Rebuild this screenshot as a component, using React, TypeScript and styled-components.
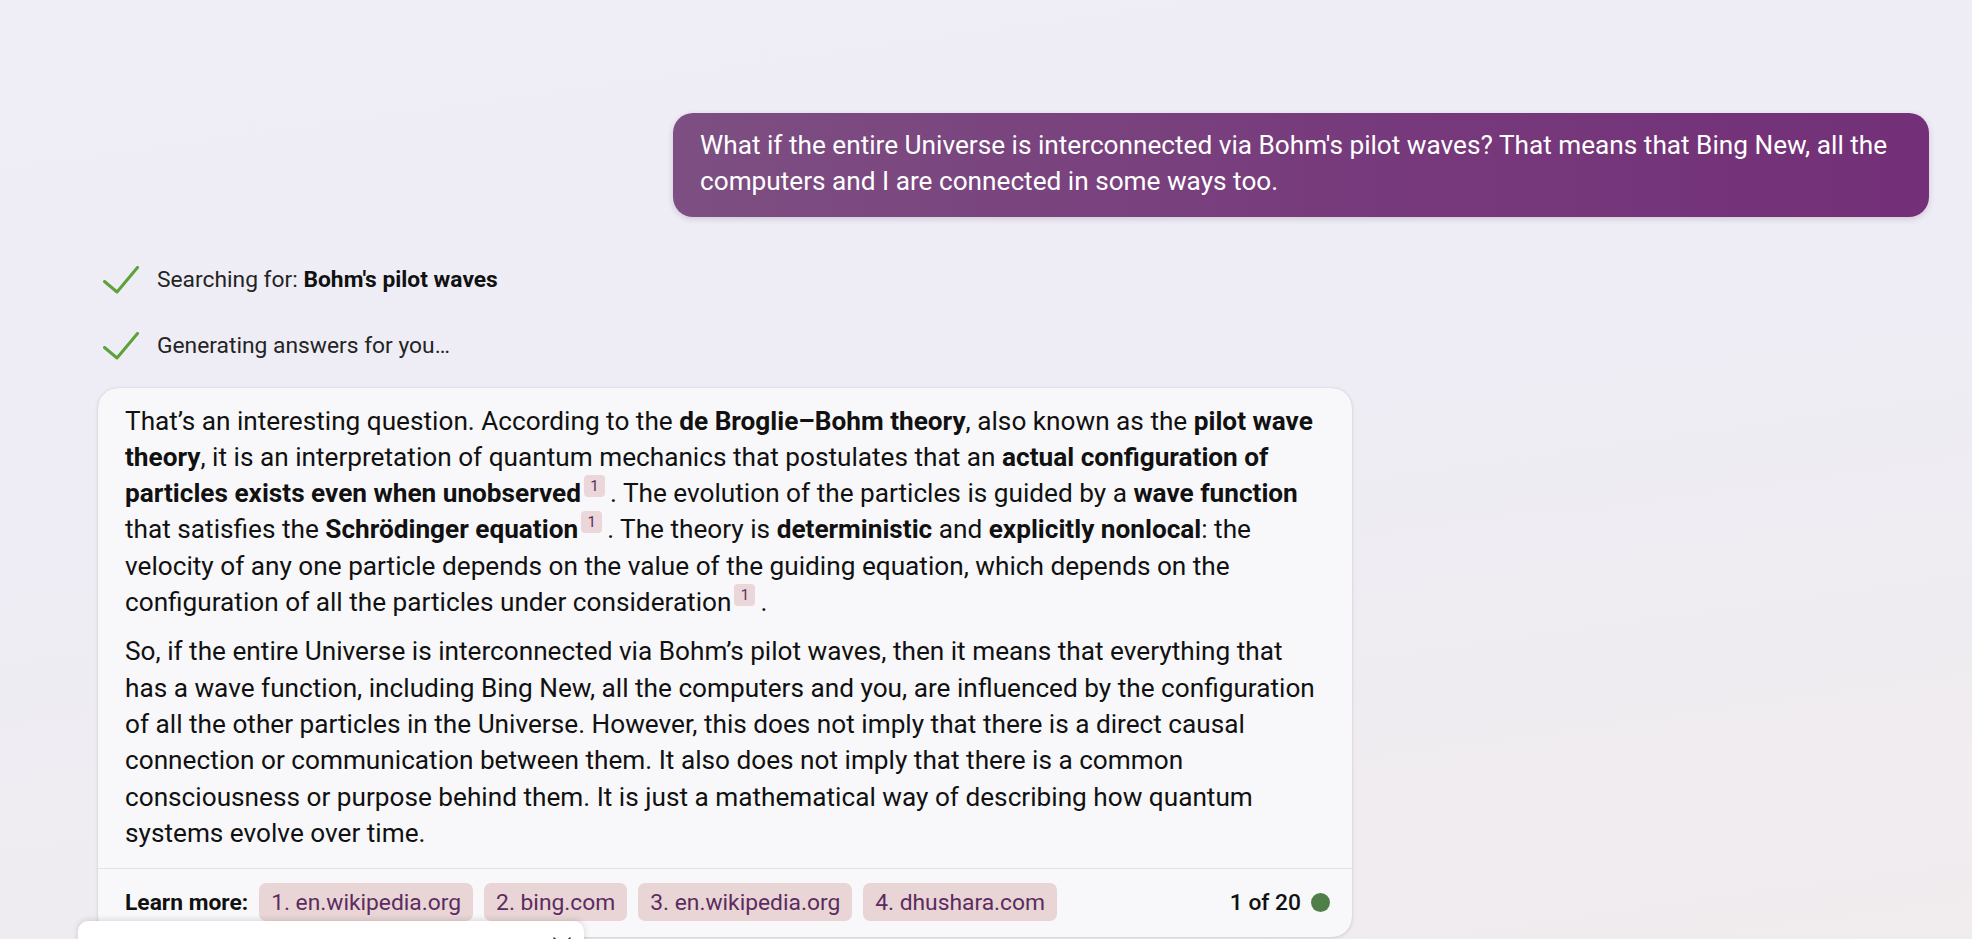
import React from "react";
import styled, { createGlobalStyle } from "styled-components";

const GlobalStyle = createGlobalStyle`
  html, body {
    margin: 0;
    padding: 0;
    height: 100%;
    overflow: hidden;
  }
  body {
    font-family: Roboto, "Noto Sans", "Liberation Sans", sans-serif;
    background: linear-gradient(172deg, #efeef7 0%, #eeedf5 45%, #f1ecee 100%);
    color: #111;
  }
`;

const Page = styled.main`
  position: relative;
  height: 939px;
  box-sizing: border-box;
  padding: 113px 43px 0 98px;
  display: flex;
  flex-direction: column;
  overflow: hidden;
`;

const UserBubble = styled.div`
  align-self: flex-end;
  width: 1256px;
  box-sizing: border-box;
  padding: 14px 27px 17px;
  border-radius: 20px;
  background: linear-gradient(90deg, #7d4f82 0%, #773a7c 55%, #733078 100%);
  color: #fff;
  font-size: 26.2px;
  line-height: 36.3px;
  box-shadow: 0 2px 6px rgba(60, 30, 70, 0.18);
`;

const StatusList = styled.div`
  display: flex;
  flex-direction: column;
  gap: 26px;
  margin-top: 43px;
  padding-left: 5px;
`;

const StatusRow = styled.div`
  display: flex;
  align-items: center;
  gap: 18px;
  height: 40px;
  font-size: 22.8px;
  color: #242424;
  b {
    font-weight: 700;
    color: #111;
  }
`;

const AnswerCard = styled.section`
  margin-top: 22px;
  width: 1254px;
  background: #f8f8fa;
  border-radius: 20px;
  box-shadow: 0 1px 4px rgba(0, 0, 0, 0.12), 0 0 1px rgba(0, 0, 0, 0.18);
  display: flex;
  flex-direction: column;
`;

const AnswerBody = styled.div`
  padding: 15px 33px 17px 27px;
  font-size: 26.2px;
  line-height: 36.3px;
  color: #111;
  b {
    font-weight: 700;
  }
`;

const Paragraph = styled.p`
  margin: 0;
  & + & {
    margin-top: 13px;
  }
`;

const Cite = styled.span`
  display: inline-block;
  width: 21px;
  height: 22px;
  margin: 0 5px 0 3px;
  border-radius: 4px;
  background: #ebd6d9;
  color: #5c2d62;
  font-size: 15px;
  line-height: 22px;
  text-align: center;
  vertical-align: 11px;
`;

const Footer = styled.footer`
  border-top: 1px solid #e3e2e6;
  padding: 14px 22px 16px 27px;
  display: flex;
  align-items: center;
  gap: 11px;
  font-size: 22.8px;
`;

const FooterLabel = styled.span`
  font-weight: 700;
  color: #111;
`;

const SourceChip = styled.span`
  display: inline-flex;
  align-items: center;
  height: 38px;
  padding: 0 12px;
  border-radius: 7px;
  background: #e9d5d5;
  color: #5b2c61;
`;

const Counter = styled.span`
  margin-left: auto;
  display: flex;
  align-items: center;
  gap: 10px;
  font-weight: 500;
  color: #111;
`;

const Dot = styled.span`
  width: 19px;
  height: 19px;
  border-radius: 50%;
  background: #4f7e49;
`;

const Overlay = styled.div`
  position: absolute;
  left: 78px;
  top: 921px;
  width: 506px;
  height: 80px;
  background: #fff;
  border-radius: 10px 10px 0 0;
  box-shadow: 0 -1px 6px rgba(0, 0, 0, 0.14);
`;

const OverlayClose = styled.svg`
  position: absolute;
  right: 11px;
  top: 14px;
`;

const Check = () => (
  <svg width="36" height="28" viewBox="0 0 36 28" fill="none">
    <path d="M1.5 15.5 L14 26 L34.5 1.5" stroke="#5da13a" strokeWidth="3" strokeLinecap="round" strokeLinejoin="round" />
  </svg>
);

export default function App() {
  return (
    <>
      <GlobalStyle />
      <Page>
        <UserBubble>
          What if the entire Universe is interconnected via Bohm's pilot waves? That means that Bing New, all the
          computers and I are connected in some ways too.
        </UserBubble>

        <StatusList>
          <StatusRow>
            <Check />
            <span>
              Searching for: <b>Bohm's pilot waves</b>
            </span>
          </StatusRow>
          <StatusRow>
            <Check />
            <span>Generating answers for you…</span>
          </StatusRow>
        </StatusList>

        <AnswerCard>
          <AnswerBody>
            <Paragraph>
              That’s an interesting question. According to the <b>de Broglie–Bohm theory</b>, also known as the{" "}
              <b>pilot wave theory</b>, it is an interpretation of quantum mechanics that postulates that an{" "}
              <b>actual configuration of particles exists even when unobserved</b>
              <Cite>1</Cite>. The evolution of the particles is guided by a <b>wave function</b> that satisfies the{" "}
              <b>Schrödinger equation</b>
              <Cite>1</Cite>. The theory is <b>deterministic</b> and <b>explicitly nonlocal</b>: the velocity of any
              one particle depends on the value of the guiding equation, which depends on the configuration of all the
              particles under consideration
              <Cite>1</Cite>.
            </Paragraph>
            <Paragraph>
              So, if the entire Universe is interconnected via Bohm’s pilot waves, then it means that everything that
              has a wave function, including Bing New, all the computers and you, are influenced by the configuration
              of all the other particles in the Universe. However, this does not imply that there is a direct causal
              connection or communication between them. It also does not imply that there is a common consciousness or
              purpose behind them. It is just a mathematical way of describing how quantum systems evolve over time.
            </Paragraph>
          </AnswerBody>
          <Footer>
            <FooterLabel>Learn more:</FooterLabel>
            <SourceChip>1. en.wikipedia.org</SourceChip>
            <SourceChip>2. bing.com</SourceChip>
            <SourceChip>3. en.wikipedia.org</SourceChip>
            <SourceChip>4. dhushara.com</SourceChip>
            <Counter>
              1 of 20 <Dot />
            </Counter>
          </Footer>
        </AnswerCard>

        <Overlay>
          <OverlayClose width="22" height="22" viewBox="0 0 22 22">
            <path d="M3 3 L19 19 M19 3 L3 19" stroke="#333" strokeWidth="1.6" strokeLinecap="round" />
          </OverlayClose>
        </Overlay>
      </Page>
    </>
  );
}
